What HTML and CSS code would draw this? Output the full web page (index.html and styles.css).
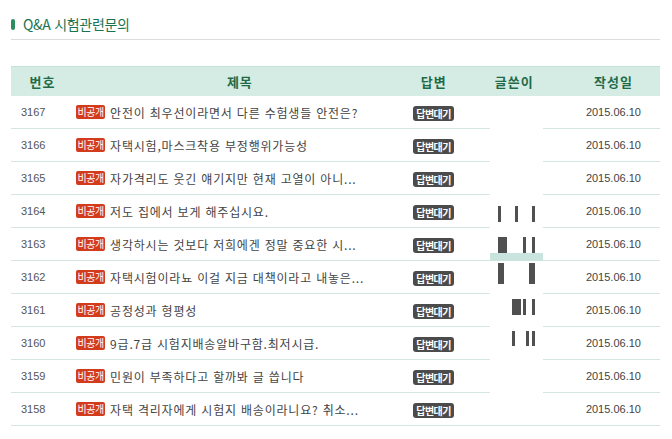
FILE: index.html
```html
<!DOCTYPE html>
<html lang="ko">
<head>
    <meta charset="UTF-8">
    <title>Q&amp;A 시험관련문의</title>
    <link rel="stylesheet" href="styles.css">
</head>
<body>
    <div class="board">
        <h2 class="board-title"><span class="pill"></span>Q&amp;A 시험관련문의</h2>

        <table class="list">
            <colgroup>
                <col class="c-num">
                <col class="c-subject">
                <col class="c-answer">
                <col class="c-writer">
                <col class="c-date">
            </colgroup>
            <thead>
                <tr>
                    <th>번호</th>
                    <th>제목</th>
                    <th>답변</th>
                    <th>글쓴이</th>
                    <th>작성일</th>
                </tr>
            </thead>
            <tbody>
                <tr>
                    <td class="num">3167</td>
                    <td class="subject"><span class="secret">비공개</span>안전이 최우선이라면서 다른 수험생들 안전은?</td>
                    <td class="answer"><span class="wait">답변대기</span></td>
                    <td class="writer"><div class="name"></div></td>
                    <td class="date">2015.06.10</td>
                </tr>
                <tr>
                    <td class="num">3166</td>
                    <td class="subject"><span class="secret">비공개</span>자택시험,마스크착용 부정행위가능성</td>
                    <td class="answer"><span class="wait">답변대기</span></td>
                    <td class="writer"><div class="name"></div></td>
                    <td class="date">2015.06.10</td>
                </tr>
                <tr>
                    <td class="num">3165</td>
                    <td class="subject"><span class="secret">비공개</span>자가격리도 웃긴 얘기지만 현재 고열이 아니...</td>
                    <td class="answer"><span class="wait">답변대기</span></td>
                    <td class="writer"><div class="name"></div></td>
                    <td class="date">2015.06.10</td>
                </tr>
                <tr>
                    <td class="num">3164</td>
                    <td class="subject"><span class="secret">비공개</span>저도 집에서 보게 해주십시요.</td>
                    <td class="answer"><span class="wait">답변대기</span></td>
                    <td class="writer"><div class="name">
                        <svg width="53" height="32" viewBox="0 0 53 32"><g fill="#505050">
                            <rect x="8" y="11" width="3" height="16"/>
                            <rect x="25" y="11" width="3" height="16"/>
                            <rect x="42" y="11" width="3" height="16"/>
                        </g></svg>
                    </div></td>
                    <td class="date">2015.06.10</td>
                </tr>
                <tr>
                    <td class="num">3163</td>
                    <td class="subject"><span class="secret">비공개</span>생각하시는 것보다 저희에겐 정말 중요한 시...</td>
                    <td class="answer"><span class="wait">답변대기</span></td>
                    <td class="writer"><div class="name">
                        <svg width="53" height="32" viewBox="0 0 53 32"><g fill="#505050">
                            <rect x="8" y="9" width="9" height="17"/>
                            <rect x="33" y="9" width="3" height="17"/>
                            <rect x="42" y="9" width="3" height="17"/>
                        </g></svg>
                        <span class="patch"></span>
                    </div></td>
                    <td class="date">2015.06.10</td>
                </tr>
                <tr>
                    <td class="num">3162</td>
                    <td class="subject"><span class="secret">비공개</span>자택시험이라뇨 이걸 지금 대책이라고 내놓은...</td>
                    <td class="answer"><span class="wait">답변대기</span></td>
                    <td class="writer"><div class="name">
                        <svg width="53" height="32" viewBox="0 0 53 32"><g fill="#505050">
                            <rect x="8" y="2" width="6" height="21"/>
                            <rect x="39" y="2" width="6" height="21"/>
                        </g></svg>
                    </div></td>
                    <td class="date">2015.06.10</td>
                </tr>
                <tr>
                    <td class="num">3161</td>
                    <td class="subject"><span class="secret">비공개</span>공정성과 형평성</td>
                    <td class="answer"><span class="wait">답변대기</span></td>
                    <td class="writer"><div class="name">
                        <svg width="53" height="32" viewBox="0 0 53 32"><g fill="#505050">
                            <rect x="22" y="5" width="9" height="16"/>
                            <rect x="33" y="5" width="3" height="16"/>
                            <rect x="42" y="5" width="3" height="16"/>
                        </g></svg>
                    </div></td>
                    <td class="date">2015.06.10</td>
                </tr>
                <tr>
                    <td class="num">3160</td>
                    <td class="subject"><span class="secret">비공개</span>9급.7급 시험지배송알바구함.최저시급.</td>
                    <td class="answer"><span class="wait">답변대기</span></td>
                    <td class="writer"><div class="name">
                        <svg width="53" height="32" viewBox="0 0 53 32"><g fill="#505050">
                            <rect x="22" y="4" width="3" height="15"/>
                            <rect x="36" y="4" width="3" height="15"/>
                            <rect x="42" y="4" width="3" height="15"/>
                        </g></svg>
                    </div></td>
                    <td class="date">2015.06.10</td>
                </tr>
                <tr>
                    <td class="num">3159</td>
                    <td class="subject"><span class="secret">비공개</span>민원이 부족하다고 할까봐 글 씁니다</td>
                    <td class="answer"><span class="wait">답변대기</span></td>
                    <td class="writer"><div class="name"></div></td>
                    <td class="date">2015.06.10</td>
                </tr>
                <tr class="last">
                    <td class="num">3158</td>
                    <td class="subject"><span class="secret">비공개</span>자택 격리자에게 시험지 배송이라니요? 취소...</td>
                    <td class="answer"><span class="wait">답변대기</span></td>
                    <td class="writer"><div class="name"></div></td>
                    <td class="date">2015.06.10</td>
                </tr>
            </tbody>
        </table>
    </div>
</body>
</html>
```

FILE: styles.css
```css
body {
    margin: 0;
    padding: 0;
    background: #fff;
    font-family: "Noto Sans CJK KR", "Noto Sans", sans-serif;
    color: #444;
}

.board {
    padding: 0 12px 0 11px;
}

.board-title {
    display: flex;
    align-items: center;
    margin: 0;
    height: 40px;
    padding-top: 9px;
    box-sizing: border-box;
    border-bottom: 1px solid #dcdcdc;
    font-size: 14px;
    font-weight: normal;
    color: #1b7450;
    letter-spacing: -0.3px;
}

.pill {
    display: inline-block;
    width: 4px;
    height: 11px;
    margin-right: 8px;
    border-radius: 2px;
    background: #2b8c5f;
}

.list {
    width: 100%;
    margin-top: 26px;
    border-collapse: collapse;
    table-layout: fixed;
    font-size: 12px;
}

.c-num { width: 63px; }
.c-subject { width: 331px; }
.c-answer { width: 56px; }
.c-writer { width: 105px; }
.c-date { width: 93px; }

.list th {
    height: 29px;
    padding: 0;
    background: #d5ece4;
    border-top: 1px solid #c6e2d7;
    color: #1f6b48;
    font-size: 13px;
    font-weight: bold;
    letter-spacing: 1px;
}

.list td {
    height: 32px;
    padding: 0;
    border-bottom: 1px solid #d3e6e0;
    vertical-align: middle;
    white-space: nowrap;
    overflow: hidden;
}

.num {
    padding-left: 10px !important;
    font-family: "Liberation Sans", sans-serif;
    font-size: 11px;
    color: #555;
}

.subject {
    color: #444;
    padding-left: 2px !important;
    letter-spacing: 0.8px;
}

.secret {
    display: inline-block;
    position: relative;
    top: -2px;
    width: 29px;
    height: 14px;
    line-height: 14px;
    margin-right: 5px;
    border-radius: 2px;
    background: #d23b1c;
    color: #fff;
    font-size: 10px;
    text-align: center;
    letter-spacing: -0.5px;
}

.answer {
    text-align: center;
}

.wait {
    display: inline-block;
    width: 41px;
    height: 15px;
    line-height: 15px;
    border-radius: 3px;
    background: #4b4b4b;
    color: #fff;
    font-size: 10px;
    font-weight: bold;
    text-align: center;
    letter-spacing: -0.5px;
}

.list td.writer {
    border-bottom: none;
    background:
        linear-gradient(#d3e6e0, #d3e6e0) left bottom / 28px 1px no-repeat,
        linear-gradient(#d3e6e0, #d3e6e0) right bottom / 24px 1px no-repeat;
}

.list tr.last td.writer {
    border-bottom: 1px solid #d3e6e0;
    background: none;
}

.name {
    position: relative;
    width: 53px;
    height: 32px;
    margin-left: 28px;
}

.name svg {
    display: block;
}

.patch {
    position: absolute;
    left: 0;
    top: 25px;
    width: 53px;
    height: 15px;
    background: #c9e4dc;
    z-index: 1;
}

.date {
    text-align: center;
    font-family: "Liberation Sans", sans-serif;
    font-size: 11px;
    color: #444;
}
```
